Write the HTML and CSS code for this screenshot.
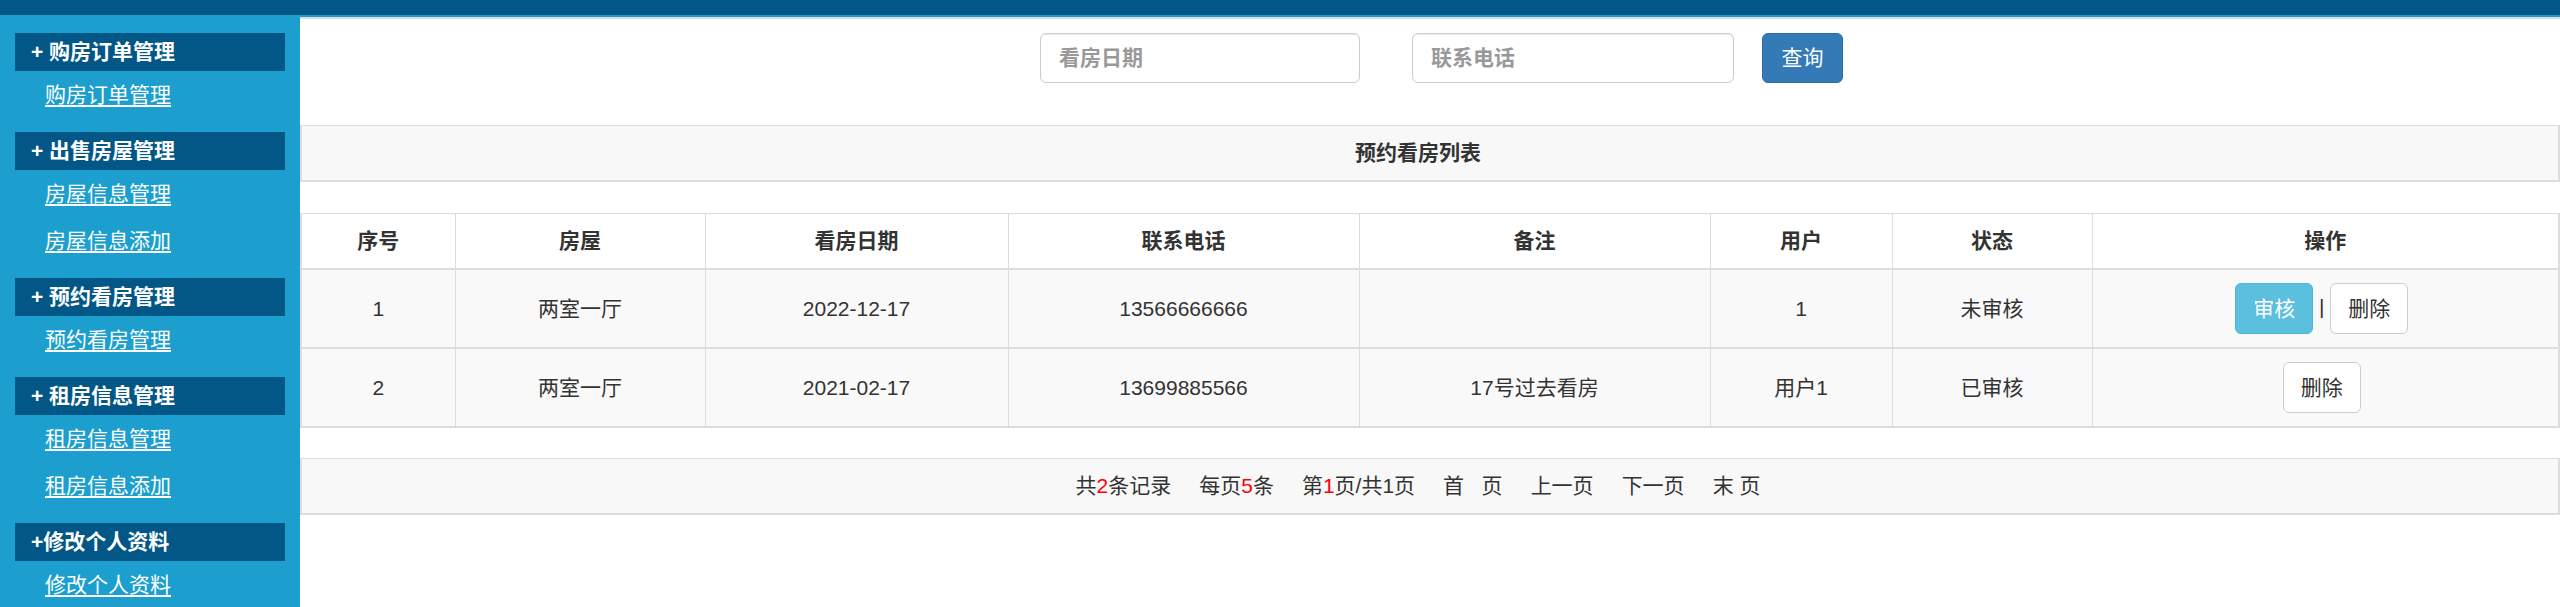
FILE: index.html
```html
<!DOCTYPE html>
<html lang="zh-CN">
<head>
<meta charset="utf-8">
<title>预约看房管理</title>
<link rel="stylesheet" href="styles.css">
</head>
<body>
<div class="topbar"></div>
<div class="layout">
  <aside class="sidebar">
    <div class="sec">
      <div class="sec-title">+ 购房订单管理</div>
      <ul class="sec-links"><li><a href="#">购房订单管理</a></li></ul>
    </div>
    <div class="sec">
      <div class="sec-title">+ 出售房屋管理</div>
      <ul class="sec-links"><li><a href="#">房屋信息管理</a></li><li><a href="#">房屋信息添加</a></li></ul>
    </div>
    <div class="sec">
      <div class="sec-title">+ 预约看房管理</div>
      <ul class="sec-links"><li><a href="#">预约看房管理</a></li></ul>
    </div>
    <div class="sec">
      <div class="sec-title">+ 租房信息管理</div>
      <ul class="sec-links"><li><a href="#">租房信息管理</a></li><li><a href="#">租房信息添加</a></li></ul>
    </div>
    <div class="sec">
      <div class="sec-title">+修改个人资料</div>
      <ul class="sec-links"><li><a href="#">修改个人资料</a></li></ul>
    </div>
  </aside>
  <main class="main">
    <form class="search">
      <input class="field field-date" type="text" placeholder="看房日期">
      <input class="field field-phone" type="text" placeholder="联系电话">
      <button class="btn btn-primary" type="button">查询</button>
    </form>
    <div class="panel-title"><span class="center-text">预约看房列表</span></div>
    <table class="grid">
      <thead>
        <tr>
          <th class="c-no">序号</th>
          <th class="c-house">房屋</th>
          <th class="c-date">看房日期</th>
          <th class="c-phone">联系电话</th>
          <th class="c-note">备注</th>
          <th class="c-user">用户</th>
          <th class="c-state">状态</th>
          <th class="c-ops">操作</th>
        </tr>
      </thead>
      <tbody>
        <tr>
          <td>1</td>
          <td>两室一厅</td>
          <td>2022-12-17</td>
          <td>13566666666</td>
          <td></td>
          <td>1</td>
          <td>未审核</td>
          <td class="ops"><button class="btn btn-info" type="button">审核</button> | <button class="btn btn-default" type="button">删除</button></td>
        </tr>
        <tr>
          <td>2</td>
          <td>两室一厅</td>
          <td>2021-02-17</td>
          <td>13699885566</td>
          <td>17号过去看房</td>
          <td>用户1</td>
          <td>已审核</td>
          <td class="ops"><button class="btn btn-default" type="button">删除</button></td>
        </tr>
      </tbody>
    </table>
    <div class="pager">
      <span class="pg">共<em>2</em>条记录</span>
      <span class="pg">每页<em>5</em>条</span>
      <span class="pg">第<em>1</em>页/共1页</span>
      <a class="pg pg-link" href="#">首&nbsp;&nbsp;&nbsp;页</a>
      <a class="pg pg-link" href="#">上一页</a>
      <a class="pg pg-link" href="#">下一页</a>
      <a class="pg pg-link" href="#">末&nbsp;页</a>
    </div>
  </main>
</div>
</body>
</html>
```

FILE: styles.css
```css
* {
  box-sizing: border-box;
}

html, body {
  margin: 0;
  padding: 0;
  height: 100%;
}

body {
  font-family: "Liberation Sans", "Noto Sans CJK SC", Arial, sans-serif;
  font-size: 21px;
  line-height: 30px;
  color: #333;
  background: #fff;
  overflow: hidden;
}

.topbar {
  height: 17px;
  background: #035786;
  border-bottom: 2px solid #1c9fce;
}

.layout {
  display: flex;
  height: calc(100vh - 17px);
}

/* ---------- sidebar ---------- */
.sidebar {
  width: 300px;
  flex: 0 0 300px;
  background: #1c9fce;
  padding-top: 16px;
}

.sec {
  margin-bottom: 14px;
}

.sec-title {
  margin: 0 15px;
  height: 38px;
  line-height: 38px;
  padding-left: 16px;
  background: #035786;
  color: #fff;
  font-weight: bold;
  font-size: 21px;
}

.sec-links {
  list-style: none;
  margin: 0;
  padding: 0;
}

.sec-links li {
  height: 47px;
  line-height: 47px;
  padding-left: 45px;
}

.sec-links a {
  color: #fff;
  text-decoration: underline;
  text-underline-offset: 3px;
}

/* ---------- main ---------- */
.main {
  flex: 1;
  min-width: 0;
  border-top: 2px solid #ddd;
}

.search {
  display: flex;
  justify-content: center;
  align-items: center;
  margin: 0;
  padding: 14px 0 0 23px;
}

.field {
  height: 50px;
  border: 1px solid #ccc;
  border-radius: 6px;
  padding: 0 18px;
  font: inherit;
  font-size: 21px;
  color: #555;
  background: #fff;
  box-shadow: inset 0 1px 1px rgba(0, 0, 0, 0.075);
  outline: none;
}

.field::placeholder {
  color: #999;
  font-weight: bold;
}

.field-date {
  width: 320px;
  margin-right: 52px;
}

.field-phone {
  width: 322px;
  margin-right: 28px;
}

.btn {
  display: inline-block;
  height: 51px;
  padding: 0 17px;
  font: inherit;
  font-size: 21px;
  line-height: 49px;
  border: 1px solid transparent;
  border-radius: 6px;
  vertical-align: middle;
  cursor: pointer;
}

.btn-primary {
  height: 50px;
  line-height: 48px;
  width: 81px;
  padding: 0;
  color: #fff;
  background: #337ab7;
  border-color: #2e6da4;
}

.btn-info {
  width: 78px;
  padding: 0;
  color: #fff;
  background: #5bc0de;
  border-color: #46b8da;
}

.btn-default {
  width: 78px;
  padding: 0;
  color: #333;
  background: #fff;
  border-color: #ccc;
}

.panel-title {
  margin-top: 42px;
  background: #f8f8f8;
  border: 2px solid #ddd;
  border-top-width: 1px;
  padding: 12px 24px 12px 0;
  text-align: center;
  font-weight: bold;
}

/* ---------- table ---------- */
.grid {
  margin-top: 31px;
  width: 100%;
  border-collapse: collapse;
  table-layout: fixed;
  border: 2px solid #ddd;
  border-top-width: 1px;
}

.grid th,
.grid td {
  border: 1px solid #ddd;
  border-bottom-width: 2px;
  padding: 12px;
  text-align: center;
  vertical-align: middle;
  line-height: 30px;
}

.grid tbody td {
  padding-top: 13px;
  padding-bottom: 13px;
  background: #f9f9f9;
}

.grid th {
  background: #fff;
  font-weight: bold;
}

.c-no { width: 154px; }
.c-house { width: 250px; }
.c-date { width: 303px; }
.c-phone { width: 351px; }
.c-note { width: 351px; }
.c-user { width: 182px; }
.c-state { width: 200px; }

.grid td.ops {
  padding-right: 19px;
  white-space: nowrap;
}

/* ---------- pager ---------- */
.pager {
  margin-top: 30px;
  background: #f8f8f8;
  border: 2px solid #ddd;
  border-top-width: 1px;
  padding: 12px 24px 12px 0;
  display: flex;
  justify-content: center;
  gap: 28px;
}

.pg {
  color: #333;
  text-decoration: none;
}

.pg em {
  font-style: normal;
  color: #f00;
}

.pager .pg-link:nth-of-type(5) {
  margin-left: -4px;
}
```
